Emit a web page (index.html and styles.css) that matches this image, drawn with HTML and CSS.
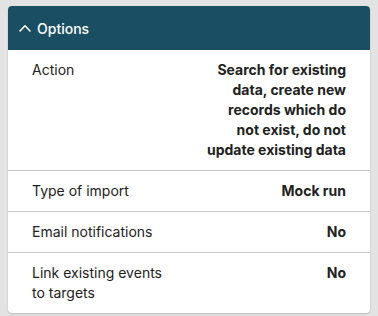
FILE: index.html
```html
<!DOCTYPE html>
<html lang="en">
<head>
<meta charset="utf-8">
<link rel="stylesheet" href="styles.css">
</head>
<body>
<section class="card">
  <header class="card-header">
    <svg class="chev" width="12" height="8" viewBox="0 0 12 8" aria-hidden="true"><path d="M1 7 L6 1.8 L11 7" fill="none" stroke="#fff" stroke-width="1.6" stroke-linecap="round" stroke-linejoin="round"/></svg>
    <span class="title">Options</span>
  </header>
  <dl class="rows">
    <div class="row">
      <dt>Action</dt>
      <dd>Search for existing data, create new records which do not exist, do not update existing data</dd>
    </div>
    <div class="row">
      <dt>Type of import</dt>
      <dd>Mock run</dd>
    </div>
    <div class="row">
      <dt>Email notifications</dt>
      <dd>No</dd>
    </div>
    <div class="row">
      <dt>Link existing events to targets</dt>
      <dd>No</dd>
    </div>
  </dl>
</section>
</body>
</html>
```

FILE: styles.css
```css
html, body {
  margin: 0;
  padding: 0;
  background: #e3e3e3;
}
body {
  padding: 6px 8px;
  font-family: Inter, "Noto Sans", sans-serif;
  color: #222;
}
.card {
  background: #fff;
  border-radius: 4px;
  box-shadow: 0 1px 2px rgba(0,0,0,0.18);
  overflow: hidden;
}
.card-header {
  height: 44px;
  background: #1a4f63;
  color: #fff;
  display: flex;
  align-items: center;
  gap: 6px;
  padding-left: 11px;
  font-size: 14px;
  font-weight: 500;
}
.chev { display: block; margin-top: -1px; }
.rows { margin: 0; padding: 0; }
.row {
  display: flex;
  justify-content: space-between;
  gap: 16px;
  padding: 10px 24px;
  font-size: 14px;
  line-height: 20px;
}
.row + .row { border-top: 1px solid #c6c6c6; }
.row dt { margin: 0; max-width: 140px; }
.row dd {
  margin: 0;
  max-width: 143px;
  text-align: right;
  font-weight: 700;
}
```
